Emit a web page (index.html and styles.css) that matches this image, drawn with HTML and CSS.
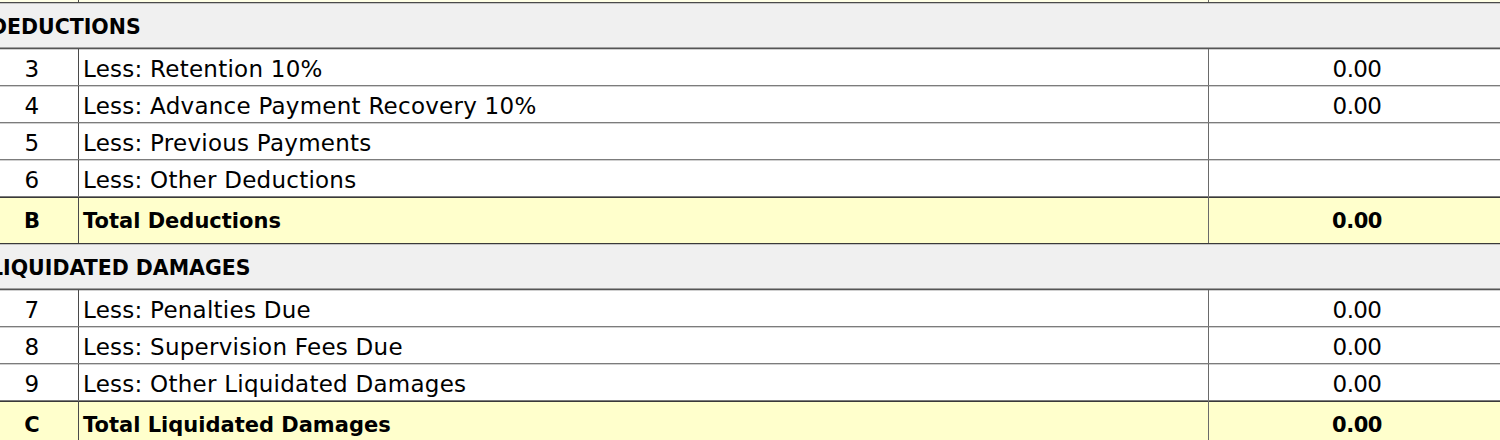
FILE: index.html
```html
<!DOCTYPE html>
<html lang="en">
<head>
<meta charset="utf-8">
<title>Deductions</title>
<link rel="stylesheet" href="styles.css">
</head>
<body>
<div class="sheet">
  <div class="row filler"><div class="c num"></div><div class="c desc"></div><div class="c amt"></div></div>

  <div class="section">DEDUCTIONS</div>
  <div class="row item"><div class="c num">3</div><div class="c desc">Less: Retention 10%</div><div class="c amt">0.00</div></div>
  <div class="row item"><div class="c num">4</div><div class="c desc">Less: Advance Payment Recovery 10%</div><div class="c amt">0.00</div></div>
  <div class="row item"><div class="c num">5</div><div class="c desc">Less: Previous Payments</div><div class="c amt"></div></div>
  <div class="row item"><div class="c num">6</div><div class="c desc">Less: Other Deductions</div><div class="c amt"></div></div>
  <div class="row total"><div class="c num">B</div><div class="c desc">Total Deductions</div><div class="c amt">0.00</div></div>

  <div class="section">LIQUIDATED DAMAGES</div>
  <div class="row item"><div class="c num">7</div><div class="c desc">Less: Penalties Due</div><div class="c amt">0.00</div></div>
  <div class="row item"><div class="c num">8</div><div class="c desc">Less: Supervision Fees Due</div><div class="c amt">0.00</div></div>
  <div class="row item"><div class="c num">9</div><div class="c desc">Less: Other Liquidated Damages</div><div class="c amt">0.00</div></div>
  <div class="row total"><div class="c num">C</div><div class="c desc">Total Liquidated Damages</div><div class="c amt">0.00</div></div>
</div>
</body>
</html>
```

FILE: styles.css
```css
html, body {
  margin: 0;
  padding: 0;
  background: #ffffff;
  overflow: hidden;
}

body {
  font-family: "DejaVu Sans", "Liberation Sans", sans-serif;
  color: #000000;
}

.sheet {
  margin-left: -14px;
  width: 1519px;
}

.row {
  display: grid;
  grid-template-columns: 93px 1130px 296px;
  box-sizing: border-box;
}

.c {
  box-sizing: border-box;
  display: flex;
  align-items: center;
  white-space: nowrap;
  overflow: hidden;
}

.num {
  border-right: 1px solid #4a4a4a;
  justify-content: center;
}

.desc {
  border-right: 1px solid #6a6a6a;
  padding-left: 4px;
}

.amt {
  justify-content: center;
}

.filler {
  height: 3px;
  background: #ffffe6;
  border-bottom: 1px solid #4a4a4a;
}

.section {
  box-sizing: border-box;
  height: 46px;
  background: #f0f0f0;
  border-bottom: 1px solid #555555;
  box-shadow: inset 0 1px 0 #c4c4c4, inset 0 -1px 0 #a0a0a0;
  padding: 2px 0 0 4px;
  display: flex;
  align-items: center;
  font-weight: bold;
  font-size: 20.5px;
  letter-spacing: 0px;
}

.item {
  height: 37px;
  border-bottom: 1px solid #7c7c7c;
  box-shadow: inset 0 1px 0 #d0d0d0;
  font-size: 23px;
  letter-spacing: 0.25px;
}

.item .c {
  padding-top: 3px;
}

.item .amt {
  letter-spacing: -0.6px;
}

.total {
  height: 47px;
  background: #ffffcc;
  border-bottom: 1px solid #3a3a3a;
  box-shadow: inset 0 1px 0 #3a3a3a;
  font-weight: bold;
  font-size: 21px;
  letter-spacing: 0px;
}

.total .c {
  padding-top: 2px;
}

.total .amt {
  letter-spacing: -0.5px;
}
```
